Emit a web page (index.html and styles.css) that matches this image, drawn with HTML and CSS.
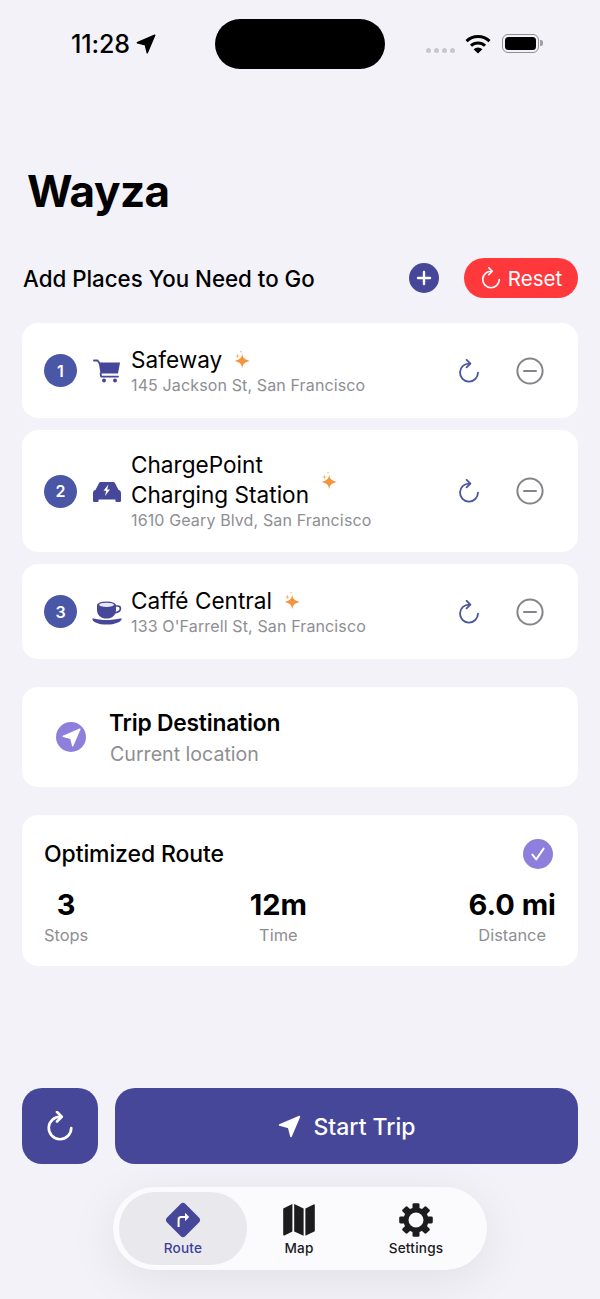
FILE: index.html
```html
<!DOCTYPE html>
<html lang="en">
<head>
    <meta charset="UTF-8">
    <meta name="viewport" content="width=device-width, initial-scale=1.0">
    <title>Wayza</title>
    <link rel="stylesheet" href="styles.css">
</head>
<body>
    <svg class="icon-defs" width="0" height="0" aria-hidden="true">
        <defs>
            <symbol id="refresh" viewBox="0 0 24 24">
                <path d="M12.5 4.6A9 9 0 1 0 21 13.6" fill="none" stroke="currentColor" stroke-linecap="round"/>
                <path d="M9.6 0.8L13.4 4.6L9.6 8.4" fill="none" stroke="currentColor" stroke-linecap="round" stroke-linejoin="round"/>
            </symbol>
            <symbol id="minus" viewBox="0 0 28 28">
                <circle cx="14" cy="14" r="12.6" fill="none" stroke="currentColor" stroke-width="2"/>
                <path d="M8 14H20" stroke="currentColor" stroke-width="2" stroke-linecap="round"/>
            </symbol>
            <symbol id="sparkle" viewBox="0 0 18 19">
                <path d="M8.2 3.6C8.8 8 10.2 9.6 15.8 11C10.2 12.4 8.8 14 8.2 18.6C7.6 14 6.2 12.4 0.8 11C6.2 9.6 7.6 8 8.2 3.6Z" fill="#f5943c"/>
                <path d="M3.4 3.4L4 5.4L5.8 6L4 6.6L3.4 8.6L2.8 6.6L1 6L2.8 5.4Z" fill="#f7b26f"/>
                <path d="M7 0.2L7.3 1.3L8.2 1.6L7.3 1.9L7 3L6.7 1.9L5.8 1.6L6.7 1.3Z" fill="#f7b26f"/>
            </symbol>
            <symbol id="nav" viewBox="0 0 24 24">
                <path d="M21.5 2.5L2.5 10.6L11.2 12.8L13.4 21.5Z" fill="currentColor" stroke="currentColor" stroke-width="1.6" stroke-linejoin="round"/>
            </symbol>
        </defs>
    </svg>

    <div class="page">
        <div class="status-bar">
            <div class="status-left">
                <span class="clock">11:28</span>
                <svg class="clock-arrow" width="22" height="22"><use href="#nav"/></svg>
            </div>
            <div class="island"></div>
            <div class="status-right">
                <div class="signal"><i></i><i></i><i></i><i></i></div>
                <svg class="wifi" width="26" height="20" viewBox="0 0 26 20">
                    <path d="M1.5 7.2A16.5 16.5 0 0 1 24.5 7.2" fill="none" stroke="#000" stroke-width="3"/>
                    <path d="M6 11.8A10 10 0 0 1 20 11.8" fill="none" stroke="#000" stroke-width="3"/>
                    <path d="M13 19.6L8.6 15.2A6.4 6.4 0 0 1 17.4 15.2Z" fill="#000"/>
                </svg>
                <div class="battery"><div class="battery-fill"></div></div>
            </div>
        </div>

        <h1 class="app-title">Wayza</h1>

        <div class="places-head">
            <h2>Add Places You Need to Go</h2>
            <button class="add-btn">
                <svg width="16" height="16" viewBox="0 0 16 16"><path d="M8 2V14M2 8H14" stroke="#fff" stroke-width="2.4" stroke-linecap="round"/></svg>
            </button>
            <button class="reset-btn">
                <svg class="reset-icon" width="22" height="22"><use href="#refresh"/></svg>
                Reset
            </button>
        </div>

        <div class="stop-card">
            <span class="stop-num">1</span>
            <svg class="stop-icon" width="30" height="28" viewBox="-1 0 30 28">
                <path d="M1 3.5H4.6L6.4 6" fill="none" stroke="#47479a" stroke-width="1.8" stroke-linecap="round" stroke-linejoin="round"/>
                <path d="M5.6 5.5H27L25 16.5H7.6Z" fill="#47479a"/>
                <path d="M7.6 16.5L8.2 19.6H25" fill="none" stroke="#47479a" stroke-width="1.8" stroke-linecap="round"/>
                <circle cx="11" cy="23.6" r="2" fill="#47479a"/>
                <circle cx="22" cy="23.6" r="2" fill="#47479a"/>
            </svg>
            <div class="stop-text">
                <div class="stop-name-row">
                    <span class="stop-name">Safeway</span>
                    <svg class="sparkle" width="18" height="19"><use href="#sparkle"/></svg>
                </div>
                <div class="stop-addr">145 Jackson St, San Francisco</div>
            </div>
            <svg class="row-refresh" width="24" height="24"><use href="#refresh"/></svg>
            <svg class="row-minus" width="28" height="28"><use href="#minus"/></svg>
        </div>

        <div class="stop-card">
            <span class="stop-num">2</span>
            <svg class="stop-icon" width="30" height="28" viewBox="0 0 30 28">
                <path d="M9 5H21C22 5 22.8 5.5 23.2 6.5L26.4 12.8C28 13.5 29 14.6 29 16.2V23.4C29 24.4 28.4 25 27.4 25H25C24 25 23.4 24.4 23.4 23.4V22.4H6.6V23.4C6.6 24.4 6 25 5 25H2.6C1.6 25 1 24.4 1 23.4V16.2C1 14.6 2 13.5 3.6 12.8L6.8 6.5C7.2 5.5 8 5 9 5Z" fill="#47479a"/>
                <path d="M16.4 7.4L11.5 13.8H14.2L13 19L18 12.4H15.2Z" fill="#fff"/>
            </svg>
            <div class="stop-text">
                <div class="stop-name-row">
                    <span class="stop-name">ChargePoint<br>Charging Station</span>
                    <svg class="sparkle" width="18" height="19"><use href="#sparkle"/></svg>
                </div>
                <div class="stop-addr">1610 Geary Blvd, San Francisco</div>
            </div>
            <svg class="row-refresh" width="24" height="24"><use href="#refresh"/></svg>
            <svg class="row-minus" width="28" height="28"><use href="#minus"/></svg>
        </div>

        <div class="stop-card">
            <span class="stop-num">3</span>
            <svg class="stop-icon" width="30" height="28" viewBox="0 0 30 28">
                <path d="M5 7H24V12C24 17 20 20.6 14.5 20.6C9 20.6 5 17 5 12Z" fill="#47479a"/>
                <ellipse cx="14.5" cy="7" rx="9.5" ry="3.5" fill="#47479a"/>
                <ellipse cx="14.5" cy="6.8" rx="7.5" ry="2.1" fill="#e9e9f6"/>
                <path d="M24 8H25.5C27.3 8 28.4 9 28.4 10.6C28.4 12.6 26 14.5 22.5 15" fill="none" stroke="#47479a" stroke-width="1.7"/>
                <path d="M0.3 20.5C4 20.5 6 22 14.5 22C23 22 25.5 20.5 29.7 20.5C29.7 24 23 26.6 14.5 26.6C6 26.6 0.3 24 0.3 20.5Z" fill="#47479a"/>
            </svg>
            <div class="stop-text">
                <div class="stop-name-row">
                    <span class="stop-name">Caffé Central</span>
                    <svg class="sparkle" width="18" height="19"><use href="#sparkle"/></svg>
                </div>
                <div class="stop-addr">133 O'Farrell St, San Francisco</div>
            </div>
            <svg class="row-refresh" width="24" height="24"><use href="#refresh"/></svg>
            <svg class="row-minus" width="28" height="28"><use href="#minus"/></svg>
        </div>

        <div class="dest-card">
            <span class="dest-icon">
                <svg width="21" height="21"><use href="#nav"/></svg>
            </span>
            <div class="dest-text">
                <div class="dest-title">Trip Destination</div>
                <div class="dest-sub">Current location</div>
            </div>
        </div>

        <div class="route-card">
            <div class="route-head">
                <span class="route-title">Optimized Route</span>
                <span class="route-check">
                    <svg width="16" height="16" viewBox="0 0 16 16"><path d="M2.4 8.6L6.2 13.4L13.6 2.6" fill="none" stroke="#fff" stroke-width="1.9" stroke-linecap="round" stroke-linejoin="round"/></svg>
                </span>
            </div>
            <div class="route-stats">
                <div class="stat"><div class="stat-val">3</div><div class="stat-label">Stops</div></div>
                <div class="stat"><div class="stat-val">12m</div><div class="stat-label">Time</div></div>
                <div class="stat"><div class="stat-val">6.0 mi</div><div class="stat-label">Distance</div></div>
            </div>
        </div>

        <div class="actions">
            <button class="refresh-btn">
                <svg class="big-refresh" width="30" height="33" viewBox="0 0.4 24 24"><use href="#refresh"/></svg>
            </button>
            <button class="start-btn">
                <svg width="25" height="25"><use href="#nav"/></svg>
                <span>Start Trip</span>
            </button>
        </div>

        <nav class="tab-bar">
            <div class="tab active">
                <svg width="36" height="36" viewBox="0 0 36 36">
                    <rect x="5" y="5" width="26" height="26" rx="3.5" transform="rotate(45 18 18)" fill="#47479a"/>
                    <path d="M13.6 25V17.6C13.6 16 14.6 15 16.2 15H23" fill="none" stroke="#fff" stroke-width="2"/>
                    <path d="M20 10.8L24.2 15L20 19.2Z" fill="#fff"/>
                </svg>
                <span>Route</span>
            </div>
            <div class="tab">
                <svg width="36" height="36" viewBox="0 0 36 36">
                    <path d="M2.2 6.6L11.4 2V29.4L3.4 33.4C2.8 33.7 2.2 33.3 2.2 32.6Z" fill="#1c1c1e"/>
                    <path d="M13.2 2L22.6 6.4V33.8L13.2 29.4Z" fill="#1c1c1e"/>
                    <path d="M24.4 6.4L32.6 2.4C33.2 2.1 33.8 2.5 33.8 3.2V29.2L24.4 33.8Z" fill="#1c1c1e"/>
                </svg>
                <span>Map</span>
            </div>
            <div class="tab">
                <svg width="36" height="36" viewBox="0 0 36 36">
                    <g fill="#1c1c1e">
                        <rect x="14.5" y="1.2" width="7" height="8" rx="1.4"/>
                        <rect x="14.5" y="1.2" width="7" height="8" rx="1.4" transform="rotate(45 18 18)"/>
                        <rect x="14.5" y="1.2" width="7" height="8" rx="1.4" transform="rotate(90 18 18)"/>
                        <rect x="14.5" y="1.2" width="7" height="8" rx="1.4" transform="rotate(135 18 18)"/>
                        <rect x="14.5" y="1.2" width="7" height="8" rx="1.4" transform="rotate(180 18 18)"/>
                        <rect x="14.5" y="1.2" width="7" height="8" rx="1.4" transform="rotate(225 18 18)"/>
                        <rect x="14.5" y="1.2" width="7" height="8" rx="1.4" transform="rotate(270 18 18)"/>
                        <rect x="14.5" y="1.2" width="7" height="8" rx="1.4" transform="rotate(315 18 18)"/>
                    </g>
                    <circle cx="18" cy="18" r="10" fill="none" stroke="#1c1c1e" stroke-width="5"/>
                </svg>
                <span>Settings</span>
            </div>
        </nav>
    </div>
</body>
</html>
```

FILE: styles.css
```css
* {
    box-sizing: border-box;
}
body {
    margin: 0;
    background-color: #f2f2f8;
    font-family: Inter, "Noto Sans", sans-serif;
    color: #000;
}
button {
    font-family: inherit;
    border: none;
    cursor: pointer;
    padding: 0;
}
.icon-defs {
    position: absolute;
}
.page {
    width: 600px;
    height: 1299px;
    overflow: hidden;
}

/* status bar */
.status-bar {
    display: flex;
    height: 69px;
    padding-top: 19px;
}
.status-left {
    width: 215px;
    padding-left: 71px;
    padding-top: 11px;
    display: flex;
    align-items: flex-start;
    gap: 5px;
}
.clock {
    font-size: 25px;
    font-weight: 500;
    line-height: 29px;
    letter-spacing: -0.1px;
}
.clock-arrow {
    margin-top: 3px;
    color: #000;
}
.island {
    width: 170px;
    height: 50px;
    background: #000;
    border-radius: 25px;
}
.status-right {
    display: flex;
    align-items: flex-start;
    padding-left: 41px;
}
.signal {
    display: flex;
    gap: 3px;
    margin-top: 29px;
    width: 29px;
}
.signal i {
    width: 5px;
    height: 5px;
    border-radius: 50%;
    background: #c8c8cc;
}
.wifi {
    margin-left: 10px;
    margin-top: 15px;
}
.battery {
    position: relative;
    width: 37px;
    height: 19px;
    margin-left: 11px;
    margin-top: 15px;
    border: 1.5px solid #8e8e93;
    border-radius: 6px;
    padding: 2px;
}
.battery::after {
    content: "";
    position: absolute;
    right: -5px;
    top: 5px;
    width: 3px;
    height: 6px;
    background: #a0a0a5;
    border-radius: 0 2px 2px 0;
}
.battery-fill {
    height: 100%;
    background: #000;
    border-radius: 3.5px;
}

.app-title {
    margin: 94px 0 0 27px;
    font-size: 44px;
    line-height: 56px;
    font-weight: 700;
    letter-spacing: -0.5px;
}

/* places header */
.places-head {
    display: flex;
    align-items: center;
    margin: 39px 22px 0 23px;
    height: 40px;
}
.places-head h2 {
    flex: 1;
    margin: 0;
    font-size: 22.3px;
    font-weight: 500;
}
.add-btn {
    width: 30px;
    height: 30px;
    border-radius: 50%;
    background: #47479a;
    display: flex;
    align-items: center;
    justify-content: center;
    margin-right: 25px;
}
.reset-btn {
    width: 114px;
    height: 40px;
    border-radius: 20px;
    background: #ff383c;
    color: #fff;
    font-size: 20.5px;
    font-weight: 400;
    display: flex;
    align-items: center;
    justify-content: center;
    gap: 6px;
}
.reset-icon {
    stroke-width: 1.8;
}

/* stop cards */
.stop-card {
    display: flex;
    align-items: center;
    margin: 12px 22px 0;
    padding: 20px 34px 20px 22px;
    min-height: 95px;
    background: #fff;
    border-radius: 16px;
}
.places-head + .stop-card {
    margin-top: 25px;
}
.stop-num {
    flex: none;
    width: 33px;
    height: 33px;
    border-radius: 50%;
    background: #4a57a6;
    color: #fff;
    font-size: 16px;
    font-weight: 600;
    display: flex;
    align-items: center;
    justify-content: center;
}
.stop-icon {
    flex: none;
    margin-left: 15px;
    margin-right: 9px;
}
.stop-text {
    flex: 1;
    padding-bottom: 2px;
}
.stop-name-row {
    display: flex;
    align-items: center;
    gap: 12px;
}
.stop-name {
    font-size: 22.6px;
    line-height: 30px;
    font-weight: 400;
}
.stop-addr {
    font-size: 16px;
    line-height: 20px;
    color: #8e8e93;
    letter-spacing: 0.13px;
}
.row-refresh {
    color: #47559f;
    margin-right: 35px;
    stroke-width: 1.8;
}
.row-minus {
    color: #858589;
}

/* destination */
.dest-card {
    display: flex;
    align-items: center;
    margin: 28px 22px 0;
    height: 100px;
    padding-left: 34px;
    background: #fff;
    border-radius: 16px;
}
.dest-icon {
    flex: none;
    width: 30px;
    height: 30px;
    border-radius: 50%;
    background: #8e7fdc;
    color: #fff;
    display: flex;
    align-items: center;
    justify-content: center;
    margin-right: 24px;
}
.dest-text {
    padding-top: 3px;
}
.dest-title {
    font-size: 22.8px;
    line-height: 30px;
    font-weight: 600;
    letter-spacing: -0.2px;
    margin-left: -1px;
}
.dest-sub {
    font-size: 19.6px;
    line-height: 30px;
    color: #8e8e93;
    margin-top: 1px;
}

/* route summary */
.route-card {
    margin: 28px 22px 0;
    height: 151px;
    padding: 24px 22px 0;
    background: #fff;
    border-radius: 16px;
}
.route-head {
    display: flex;
    align-items: center;
    justify-content: space-between;
    padding-right: 3px;
}
.route-title {
    font-size: 23px;
    font-weight: 500;
    letter-spacing: -0.1px;
}
.route-check {
    width: 30px;
    height: 30px;
    border-radius: 50%;
    background: #8e7fdc;
    display: flex;
    align-items: center;
    justify-content: center;
}
.route-stats {
    display: flex;
    justify-content: space-between;
    margin-top: 15px;
}
.stat {
    text-align: center;
}
.stat-val {
    font-size: 29px;
    line-height: 42px;
    font-weight: 700;
}
.stat-label {
    font-size: 16.4px;
    line-height: 18px;
    color: #8e8e93;
}

/* bottom actions */
.actions {
    display: flex;
    gap: 17px;
    margin: 122px 22px 0;
}
.refresh-btn {
    width: 76px;
    height: 76px;
    border-radius: 20px;
    background: #47479a;
    color: #fff;
    display: flex;
    align-items: center;
    justify-content: center;
}
.big-refresh {
    stroke-width: 2.1;
}
.start-btn {
    flex: 1;
    height: 76px;
    border-radius: 20px;
    background: #47479a;
    color: #fff;
    font-size: 23px;
    font-weight: 500;
    display: flex;
    align-items: center;
    justify-content: center;
    gap: 11px;
}
.start-btn span {
    padding-top: 2px;
}

/* tab bar */
.tab-bar {
    display: flex;
    width: 374px;
    height: 83px;
    margin: 23px 0 0 113px;
    padding: 5px 6px;
    background: #fbfbfe;
    border-radius: 42px;
    box-shadow: 0 10px 50px rgba(0,0,0,0.08);
}
.tab {
    width: 120px;
    display: flex;
    flex-direction: column;
    align-items: center;
    justify-content: center;
    gap: 2px;
    font-size: 13.6px;
    font-weight: 500;
    color: #1c1c1e;
    letter-spacing: 0.2px;
}
.tab.active {
    width: 128px;
    background: #e8e8ed;
    border-radius: 36px;
    color: #3f3f98;
}
.tab:nth-child(2) {
    width: 104px;
}
.tab:nth-child(3) {
    width: 130px;
}
```
